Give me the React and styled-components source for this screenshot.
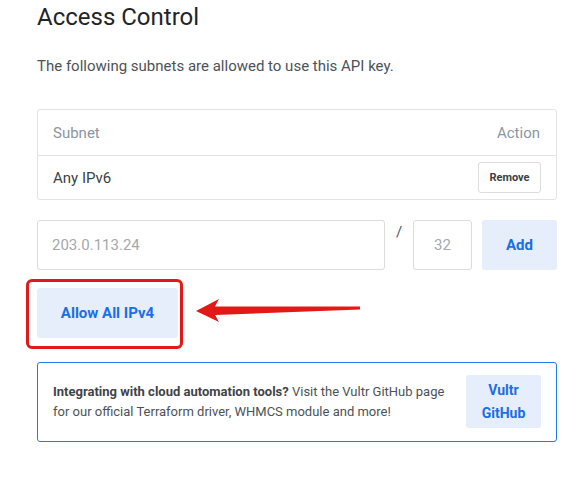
import React from "react";
import styled, { createGlobalStyle } from "styled-components";

const Global = createGlobalStyle`
  html, body { margin: 0; padding: 0; background: #fff; }
  body { font-family: Roboto, "Liberation Sans", Arial, sans-serif; -webkit-font-smoothing: antialiased; }
  * { box-sizing: border-box; }
`;

const Page = styled.div`
  width: 588px;
  padding: 3px 31px 40px 37px;
  display: flex;
  flex-direction: column;
`;

const Title = styled.h1`
  margin: 0;
  font-size: 24px;
  line-height: 28px;
  font-weight: 400;
  color: #1f2429;
`;

const Lead = styled.p`
  margin: 24px 0 0;
  font-size: 15px;
  line-height: 22px;
  color: #4d5257;
`;

const Table = styled.div`
  margin-top: 32px;
  border: 1px solid #e3e3e3;
  border-radius: 3px;
  display: flex;
  flex-direction: column;
`;

const Row = styled.div`
  display: flex;
  align-items: center;
  justify-content: space-between;
  height: ${(p) => (p.$head ? "45px" : "44px")};
  padding: 0 16px 0 15px;
  border-top: ${(p) => (p.$head ? "none" : "1px solid #e3e3e3")};
  font-size: 15px;
  color: ${(p) => (p.$head ? "#8c96a0" : "#3a3f44")};
`;

const RemoveButton = styled.button`
  height: 31px;
  width: 63px;
  border: 1px solid #dcdcdc;
  border-radius: 3px;
  background: #fff;
  font-family: inherit;
  font-size: 11px;
  font-weight: 700;
  color: #3a3f44;
  padding: 0;
  margin-right: -1px;
`;

const FormRow = styled.div`
  margin-top: 20px;
  display: flex;
  align-items: stretch;
  height: 50px;
`;

const Input = styled.input`
  width: ${(p) => p.$w}px;
  height: 50px;
  border: 1px solid #dcdcdc;
  border-radius: 3px;
  padding: 0 ${(p) => (p.$center ? "0" : "14px")};
  text-align: ${(p) => (p.$center ? "center" : "left")};
  font-family: inherit;
  font-size: 15px;
  color: #333;
  outline: none;
  &::placeholder { color: #a5a8ac; }
`;

const Slash = styled.span`
  width: 28px;
  text-align: center;
  font-size: 15px;
  line-height: 22px;
  color: #4a5a70;
  padding-top: 1px;
`;

const SoftButton = styled.button`
  border: none;
  border-radius: 3px;
  background: #e6edfb;
  color: #1a6fe6;
  font-family: inherit;
  font-weight: 700;
  font-size: ${(p) => p.$size || 15}px;
  line-height: ${(p) => p.$lh || 20}px;
  width: ${(p) => p.$w}px;
  height: ${(p) => p.$h}px;
  margin-left: ${(p) => p.$ml || 0}px;
  padding: 0;
  flex: none;
`;

const Highlight = styled.div`
  position: relative;
  margin-top: 18px;
  align-self: flex-start;
`;

const RedBox = styled.div`
  position: absolute;
  left: -11px;
  top: -9px;
  width: 157px;
  height: 70px;
  border: 3px solid #e21a17;
  border-radius: 6px;
  pointer-events: none;
`;

const Arrow = styled.svg`
  position: absolute;
  left: 143px;
  top: 2px;
  width: 190px;
  height: 40px;
  overflow: visible;
`;

const Info = styled.div`
  margin-top: 24px;
  border: 1px solid #1d7cf2;
  border-radius: 3px;
  padding: 12px 15px 13px 15px;
  display: flex;
  align-items: center;
  justify-content: space-between;
  gap: 16px;
`;

const InfoText = styled.p`
  margin: 0;
  font-size: 13px;
  line-height: 19.5px;
  color: #4d5257;
  b { color: #3f4448; font-weight: 700; }
`;

export default function App() {
  return (
    <>
      <Global />
      <Page>
        <Title>Access Control</Title>
        <Lead>The following subnets are allowed to use this API key.</Lead>
        <Table>
          <Row $head>
            <span>Subnet</span>
            <span>Action</span>
          </Row>
          <Row>
            <span>Any IPv6</span>
            <RemoveButton>Remove</RemoveButton>
          </Row>
        </Table>
        <FormRow>
          <Input $w={348} placeholder="203.0.113.24" />
          <Slash>/</Slash>
          <Input $w={59} $center placeholder="32" />
          <SoftButton $w={75} $h={50} $ml={10}>Add</SoftButton>
        </FormRow>
        <Highlight>
          <SoftButton $w={141} $h={50}>Allow All IPv4</SoftButton>
          <RedBox />
          <Arrow viewBox="0 0 190 40">
            <polygon
              points="16,21 39,9 35,16.5 180,16.6 180,19.4 35,25 39,32"
              fill="#e21a17"
            />
          </Arrow>
        </Highlight>
        <Info>
          <InfoText>
            <b>Integrating with cloud automation tools?</b> Visit the Vultr GitHub page
            <br />
            for our official Terraform driver, WHMCS module and more!
          </InfoText>
          <SoftButton $w={75} $h={53} $size={14} $lh={23}>
            Vultr
            <br />
            GitHub
          </SoftButton>
        </Info>
      </Page>
    </>
  );
}
